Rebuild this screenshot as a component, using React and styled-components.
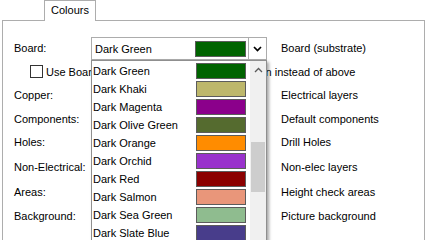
import styled, { createGlobalStyle } from "styled-components"

const GlobalStyle = createGlobalStyle`
   body {
      margin: 0;
      background: #ffffff;
      font-family: "Liberation Sans", Arial, sans-serif;
      font-size: 11px;
      color: #000000;
   }
`

const Frame = styled.div`
   width: 426px;
   height: 240px;
   overflow: hidden;
   background: #ffffff;
`

const TabStrip = styled.div`
   display: flex;
   padding-left: 44px;
`

const Tab = styled.div`
   position: relative;
   z-index: 1;
   width: 52px;
   height: 21px;
   margin-bottom: -1px;
   box-sizing: border-box;
   border: 1px solid #adadad;
   border-bottom: none;
   background: #ffffff;
   text-align: center;
   line-height: 19px;
`

const Panel = styled.div`
   margin: 0 1px 0 2px;
   height: 230px;
   border: 1px solid #adadad;
   border-bottom: none;
   padding: 15px 0 0 11px;
`

const Grid = styled.div`
   display: grid;
   grid-template-columns: 77px 176px auto;
   grid-template-rows: 24px 23px 24px 23px 24px 25px 25px 24px;
`

const Label = styled.div`
   align-self: center;
   white-space: nowrap;
   padding-left: ${(p) => (p.$right ? "14px" : "0")};
`

const CheckRow = styled.label`
   grid-column: 1 / -1;
   display: flex;
   align-items: center;
   gap: 3px;
   padding-left: 16px;
   white-space: nowrap;
`

const CheckBox = styled.span`
   width: 13px;
   height: 13px;
   box-sizing: border-box;
   border: 1px solid #333333;
   background: #ffffff;
`

const ComboWrap = styled.div`
   position: relative;
   align-self: end;
   z-index: ${(p) => (p.$open ? 5 : 0)};
`

const Combo = styled.div`
   display: flex;
   align-items: center;
   height: 23px;
   box-sizing: border-box;
   border: 1px solid #acacac;
   background: #ffffff;
`

const ComboText = styled.span`
   padding-left: 3px;
   flex: 1;
`

const Swatch = styled.span`
   width: ${(p) => (p.$wide ? "51px" : "50px")};
   height: 16px;
   box-sizing: border-box;
   border: 1px solid #5c5c5c;
   background: ${(p) => p.$color};
   margin-right: 2px;
`

const DropButton = styled.span`
   width: 17px;
   align-self: stretch;
   display: flex;
   align-items: center;
   justify-content: center;
   border-left: 1px solid #acacac;
`

const List = styled.div`
   position: absolute;
   top: 100%;
   left: 0;
   width: 176px;
   height: 184px;
   box-sizing: border-box;
   display: flex;
   border: 1px solid #8f8f8f;
   background: #ffffff;
   box-shadow: 2px 2px 3px rgba(0, 0, 0, 0.35);
`

const Items = styled.div`
   flex: 1;
   padding-top: 1px;
`

const Item = styled.div`
   display: flex;
   align-items: center;
   justify-content: space-between;
   height: 18px;
   padding: 0 2px 0 1px;
`

const ScrollBar = styled.div`
   width: 16px;
   display: flex;
   flex-direction: column;
   background: #f0f0f0;
`

const ScrollArrow = styled.div`
   height: 17px;
   display: flex;
   align-items: center;
   justify-content: center;
`

const Thumb = styled.div`
   margin: 64px 1px 0 1px;
   height: 50px;
   background: #cdcdcd;
`

const colours = [
   ["Dark Green", "#006400"],
   ["Dark Khaki", "#bdb76b"],
   ["Dark Magenta", "#8b008b"],
   ["Dark Olive Green", "#556b2f"],
   ["Dark Orange", "#ff8c00"],
   ["Dark Orchid", "#9932cc"],
   ["Dark Red", "#8b0000"],
   ["Dark Salmon", "#e9967a"],
   ["Dark Sea Green", "#8fbc8f"],
   ["Dark Slate Blue", "#483d8b"],
]

const rows = [
   ["Copper:", "Electrical layers", "#b8860b"],
   ["Components:", "Default components", "#000080"],
   ["Holes:", "Drill Holes", "#000000"],
   ["Non-Electrical:", "Non-elec layers", "#808080"],
   ["Areas:", "Height check areas", "#ff0000"],
   ["Background:", "Picture background", "#ffffff"],
]

const Chevron = ({ up }) => (
   <svg width="9" height="6" viewBox="0 0 9 6">
      {up ? (
         <polyline points="1,5 4.5,1.5 8,5" fill="none" stroke="#5a5a5a" strokeWidth="1.3" />
      ) : (
         <polyline points="1,1 4.5,4.5 8,1" fill="none" stroke="#000" strokeWidth="1.7" />
      )}
   </svg>
)

const ColourCombo = ({ name, color, open }) => (
   <ComboWrap $open={open}>
      <Combo>
         <ComboText>{name}</ComboText>
         <Swatch $wide $color={color} />
         <DropButton><Chevron /></DropButton>
      </Combo>
      {open && (
         <List>
            <Items>
               {colours.map(([n, c]) => (
                  <Item key={n}>
                     <span>{n}</span>
                     <Swatch $color={c} />
                  </Item>
               ))}
            </Items>
            <ScrollBar>
               <ScrollArrow><Chevron up /></ScrollArrow>
               <Thumb />
            </ScrollBar>
         </List>
      )}
   </ComboWrap>
)

export default function App() {
   return (
      <Frame>
         <GlobalStyle />
         <TabStrip>
            <Tab>Colours</Tab>
         </TabStrip>
         <Panel>
            <Grid>
               <Label>Board:</Label>
               <ColourCombo name="Dark Green" color="#006400" open />
               <Label $right>Board (substrate)</Label>

               <CheckRow>
                  <CheckBox />
                  Use Board colour as the background in design instead of above
               </CheckRow>

               {rows.map(([label, desc, c]) => [
                  <Label key={label}>{label}</Label>,
                  <ColourCombo key={label + "c"} name="" color={c} />,
                  <Label key={label + "d"} $right>{desc}</Label>,
               ])}
            </Grid>
         </Panel>
      </Frame>
   )
}
